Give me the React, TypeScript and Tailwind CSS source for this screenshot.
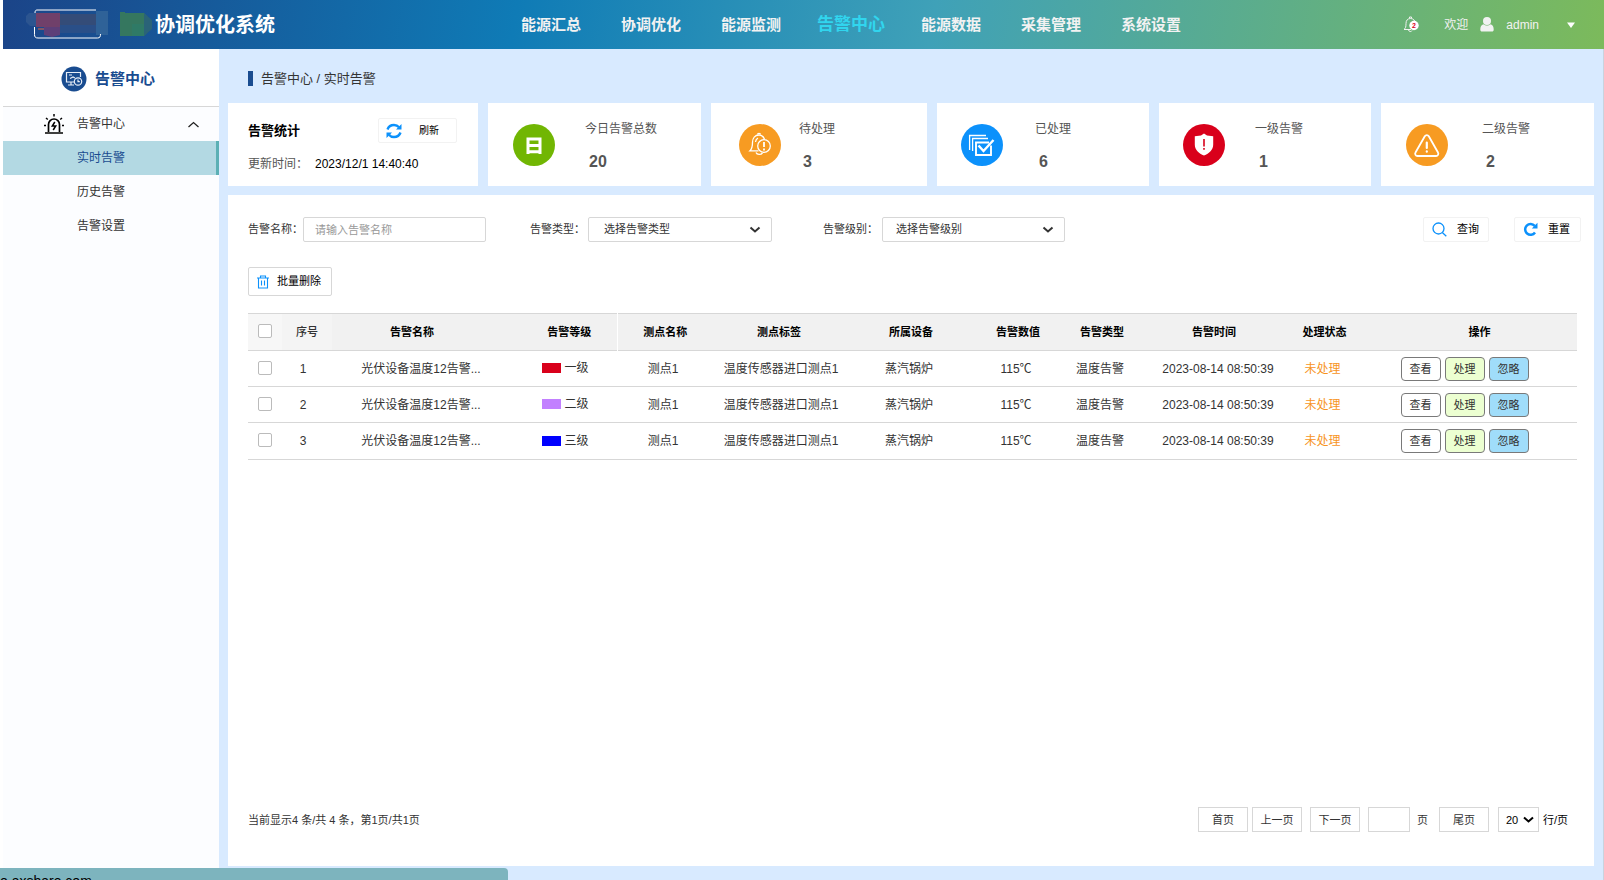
import React, { useState } from 'react';

const navItems = ['能源汇总', '协调优化', '能源监测', '告警中心', '能源数据', '采集管理', '系统设置'];

const sideItems = ['实时告警', '历史告警', '告警设置'];

const stats = [
    { label: '今日告警总数', value: 20, color: 'bg-[#71b603]', gap: 'gap-[30px] pl-[25px]', icon: <DayIcon /> },
    { label: '待处理', value: 3, color: 'bg-[#f79b22]', gap: 'gap-[18px] pl-[28px]', icon: <BellAlertIcon /> },
    { label: '已处理', value: 6, color: 'bg-[#0c91fb]', gap: 'gap-[32px] pl-[24px]', icon: <DoneIcon /> },
    { label: '一级告警', value: 1, color: 'bg-[#d9001b]', gap: 'gap-[30px] pl-[24px]', icon: <ShieldIcon /> },
    { label: '二级告警', value: 2, color: 'bg-[#f79b22]', gap: 'gap-[34px] pl-[25px]', icon: <TriangleIcon /> },
];

const rows = [
    { id: 1, level: '一级', swatch: 'bg-[#d9001b]' },
    { id: 2, level: '二级', swatch: 'bg-[#c280ff]' },
    { id: 3, level: '三级', swatch: 'bg-[#0000ff]' },
];

function DayIcon() {
    return (
        <svg viewBox="0 0 42 42" className="w-full h-full" fill="none" stroke="#fff" strokeWidth="3">
            <path d="M15 30V15h12v15M15 21.500h12M15 27.800h12" />
        </svg>
    );
}

function BellAlertIcon() {
    return (
        <svg viewBox="0 0 42 42" className="w-full h-full" fill="none" stroke="#fff" strokeWidth="1.3">
            <path d="M25.500 15.300c-1-2.800-3-4.300-5.500-4.300-4 0-6.500 3-6.500 7.500 0 4-.5 6.500-2.500 8.300h8.500" />
            <path d="M18.500 10.500c0-1.500 3-1.500 3 0M17 28.500c1 2.500 5 2.500 6.500.5M16.500 18c.2-2 1-3.200 2.500-4" />
            <circle cx="25" cy="22" r="6.300" />
            <path d="M25 18v5M25 24.500v2" strokeWidth="1.800" />
        </svg>
    );
}

function DoneIcon() {
    return (
        <svg viewBox="0 0 42 42" className="w-full h-full" fill="none" stroke="#fff">
            <path d="M8.600 26V11.500H25M11.600 27V14.500H27" strokeWidth="1.300" />
            <path d="M28 18.500H15V31h15V21.500" strokeWidth="1.900" />
            <path d="M17.500 21.500l5 5.500 10-11" strokeWidth="2.400" />
        </svg>
    );
}

function ShieldIcon() {
    return (
        <svg viewBox="0 0 42 42" className="w-full h-full">
            <path d="M21 9.500l3 2 6.200.8v8.200c0 5.500-4 9-9.200 11-5.200-2-9.200-5.500-9.200-11v-8.200l6.200-.8z" fill="#fff" />
            <path d="M20.200 15h1.600v7.500h-1.600zM20.200 24h1.600v1.800h-1.600z" fill="#d9001b" />
        </svg>
    );
}

function TriangleIcon() {
    return (
        <svg viewBox="0 0 42 42" className="w-full h-full" fill="none" stroke="#fff" strokeLinejoin="round" strokeLinecap="round">
            <path d="M18.800 12.300a2.300 2.300 0 0 1 4 0l9.200 16.200a2.300 2.300 0 0 1-2 3.500H11.500a2.300 2.300 0 0 1-2-3.500z" strokeWidth="1.800" />
            <path d="M20.800 18.500v5.500M20.800 27.300v.4" strokeWidth="2.200" />
        </svg>
    );
}

function BrandMark() {
    return (
        <svg width="127" height="34" viewBox="0 0 127 34" aria-hidden="true">
            <path d="M3 5h7v13H4l-4-4V8z" fill="#2c5590" />
            <path d="M70 3h12v24H70z" fill="#2f6298" />
            <path d="M10 5h24v14H10z" fill="#70406a" />
            <path d="M18 19h16v8l-8 2-8-2z" fill="#5d3f78" />
            <path d="M34 6h36v11H34z" fill="#344c78" />
            <path d="M34 17h36v8H34z" fill="#2a4f88" />
            <path d="M12 21h6" stroke="#e8663c" strokeWidth="1" />
            <path d="M9 5c0-2 .5-3 2-3h59M8.500 19v7.500c0 2.500 1 3.500 3.500 3.500h59.500c2.500 0 3-1.500 3-4" fill="none" stroke="#fff" strokeWidth="1" />
            <path d="M94 4h5v1h19l3 3v17l-3 3H94z" fill="#35775f" />
            <path d="M106 16h12v12h-12z" fill="#2f7a66" />
            <path d="M118 5l8 7v9l-8 7z" fill="#2a6378" />
        </svg>
    );
}

function SelectArrow() {
    return (
        <svg width="12" height="8" viewBox="0 0 12 8" className="absolute right-[11px] top-[9px] pointer-events-none" fill="none" stroke="#333" strokeWidth="2">
            <path d="M1.500 1.500L6 5.500l4.500-4" />
        </svg>
    );
}

function Header() {
    return (
        <header className="h-[49px] shrink-0 flex items-center bg-[linear-gradient(100deg,#1b4488_0%,#0f7bb6_32%,#3fa1b8_58%,#7cba5b_100%)] text-white">
            <div className="w-[498px] shrink-0 flex items-center pl-[23px]">
                <BrandMark />
                <h1 className="pl-[2px] text-[20px] leading-6 font-bold">协调优化系统</h1>
            </div>
            <nav className="flex items-center">
                {navItems.map((item) => (
                    <a
                        key={item}
                        href="#"
                        className={
                            item === '告警中心'
                                ? 'w-[100px] text-center text-[17px] leading-6 font-bold text-[#31d5ee]'
                                : 'w-[100px] text-center text-[15px] leading-6 font-bold text-[#f2f2f2]'
                        }
                    >
                        {item}
                    </a>
                ))}
            </nav>
            <div className="flex-1 flex items-center justify-end pr-[29px] text-[12px] leading-4 text-[#f2f2f2]">
                <svg width="17" height="17" viewBox="0 0 17 17" className="mr-6" role="img" aria-label="2 条通知">
                    <path d="M1 13.500c1.500-1 2-2.500 2-6C3 4.500 4.500 2.500 7.500 2.500S12 4.500 12 7M1 13.500h7M5.500 14c.5 2 3 2 3.500.5M6.500 2V1h2v1" fill="none" stroke="#f2f2f2" />
                    <circle cx="11" cy="9.500" r="4.700" fill="#fff" />
                    <text x="11" y="12" textAnchor="middle" fontSize="7" fontWeight="bold" fill="#d9001b">2</text>
                </svg>
                <span>欢迎</span>
                <svg width="14" height="15" viewBox="0 0 14 15" className="mx-3" fill="#f2f2f2">
                    <circle cx="7" cy="4" r="4" />
                    <path d="M3.500 7.200C1 8 .3 10 .3 12.500c0 1.500.7 2 1.700 2h10c1 0 1.700-.5 1.700-2 0-2.500-.7-4.500-3.200-5.300C8.500 9 5.500 9 3.500 7.200z" />
                </svg>
                <span>admin</span>
                <button aria-label="账户菜单" className="ml-7">
                    <svg width="8" height="6" viewBox="0 0 8 6" fill="#fff">
                        <path d="M0 .5h8L4 6z" />
                    </svg>
                </button>
            </div>
        </header>
    );
}

function Sidebar() {
    return (
        <aside className="w-[216px] shrink-0 bg-[#fcfdff]">
            <div className="h-[58px] flex items-center gap-2 pl-[58px] pt-[2px] bg-white border-b border-[#d7d7d7]">
                <svg width="26" height="26" viewBox="0 0 26 26">
                    <circle cx="13" cy="13" r="12.500" fill="#194c90" />
                    <g fill="none" stroke="#e8eef7" strokeWidth="1.200">
                        <path d="M19.500 11V6.500h-14v9.500H13M7 19h6M10 16v3" />
                        <path d="M8 9h3M9 12.500l3-1.500 2 1" />
                        <circle cx="17" cy="15.500" r="3.700" />
                        <path d="M17 13.500v2.200h1.800" />
                    </g>
                </svg>
                <h2 className="text-[15px] leading-6 font-bold text-[#194c90]">告警中心</h2>
            </div>
            <button className="w-full h-[34px] flex items-center pl-[41px] pr-5 text-[12px] leading-4 text-[#333]">
                <svg width="20" height="20" viewBox="0 0 20 20" className="mr-[13px]" fill="none" stroke="#000" strokeWidth="1.700">
                    <path d="M1 19h18M4.500 18v-7.500a5.500 5.500 0 0 1 11 0V18" />
                    <path d="M10 0v2.500M0 11.500h2M18 11.500h2M2 4l1.800 1.500M18 4l-1.800 1.500" strokeWidth="1.500" />
                    <path d="M10.800 8l-2.500 4h3.400l-2.500 4" strokeWidth="1.500" />
                </svg>
                <span className="flex-1 text-left">告警中心</span>
                <svg width="11" height="7" viewBox="0 0 11 7" fill="none" stroke="#222" strokeWidth="1.300">
                    <path d="M.5 6l5-4.500 5 4.500" />
                </svg>
            </button>
            {sideItems.map((item, idx) => (
                <a
                    key={item}
                    href="#"
                    className={
                        idx === 0
                            ? 'h-[34px] flex items-center pl-[74px] text-[12px] leading-4 text-[#194c90] bg-[#b3d9e3] border-r-[3px] border-[#5cb0b5]'
                            : 'h-[34px] flex items-center pl-[74px] text-[12px] leading-4 text-[#333]'
                    }
                >
                    {item}
                </a>
            ))}
        </aside>
    );
}

function StatCards() {
    return (
        <section className="flex gap-[10px]">
            <div className="w-[250px] h-[83px] bg-white pl-5 pr-[21px] pt-[15px]">
                <div className="flex items-center justify-between">
                    <h3 className="text-[13px] leading-5 font-bold text-black">告警统计</h3>
                    <button className="w-[79px] h-[25px] flex items-center pl-[7px] gap-[17px] border border-[#f2f2f2] rounded-[2px] text-[10px] text-black">
                        <svg width="16" height="16" viewBox="0 0 16 16" fill="none" stroke="#0c91fb" strokeWidth="2.400">
                            <path d="M1.500 6.500C2.500 3.500 5 2 8 2c2 0 3.800.8 5 2.300M14.500 9.500c-1 3-3.500 4.500-6.500 4.500-2 0-3.800-.8-5-2.300" />
                            <path d="M15.500 1v5.500H10zM.5 15V9.500H6z" fill="#0c91fb" stroke="none" />
                        </svg>
                        刷新
                    </button>
                </div>
                <p className="pt-[13px] flex gap-[7px] text-[12px] leading-4 text-black">
                    <span className="text-[#555]">更新时间：</span>
                    <time>2023/12/1 14:40:40</time>
                </p>
            </div>
            {stats.map((s) => (
                <div key={s.label} className={`flex-1 h-[83px] bg-white flex items-center ${s.gap}`}>
                    <div className={`w-[42px] h-[42px] shrink-0 rounded-full ${s.color}`}>{s.icon}</div>
                    <div className="pt-[5px] text-[#555]">
                        <div className="text-[12px] leading-4">{s.label}</div>
                        <div className="pl-1 pt-[13px] text-[16px] leading-6 font-bold">{s.value}</div>
                    </div>
                </div>
            ))}
        </section>
    );
}

function Filters() {
    return (
        <form className="flex items-center text-[11px] text-[#333]" onSubmit={(e) => e.preventDefault()}>
            <label htmlFor="name" className="w-[55px]">告警名称：</label>
            <input
                id="name"
                placeholder="请输入告警名称"
                className="w-[183px] h-[25px] px-[11px] border border-[#d7d7d7] rounded-[2px] placeholder:text-[#999]"
            />
            <label htmlFor="type" className="w-[58px] ml-11">告警类型：</label>
            <div className="relative">
                <select id="type" className="appearance-none w-[184px] h-[25px] px-[15px] border border-[#d7d7d7] rounded-[2px] bg-white">
                    <option>选择告警类型</option>
                </select>
                <SelectArrow />
            </div>
            <label htmlFor="level" className="w-[59px] ml-[51px]">告警级别：</label>
            <div className="relative">
                <select id="level" className="appearance-none w-[183px] h-[25px] px-[13px] border border-[#d7d7d7] rounded-[2px] bg-white">
                    <option>选择告警级别</option>
                </select>
                <SelectArrow />
            </div>
            <button className="ml-auto w-[66px] h-[25px] flex items-center gap-[10px] pl-2 border border-[#f2f2f2] rounded-[2px] text-black">
                <svg width="15" height="15" viewBox="0 0 15 15" fill="none" stroke="#0c91fb" strokeWidth="1.300">
                    <circle cx="6.500" cy="6.500" r="5.500" />
                    <path d="M10.300 10.500l4 3.800" />
                </svg>
                查询
            </button>
            <button type="reset" className="ml-[25px] w-[67px] h-[25px] flex items-center gap-[10px] pl-2 border border-[#f2f2f2] rounded-[2px] text-black">
                <svg width="15" height="15" viewBox="0 0 15 15" fill="none" stroke="#0c91fb" strokeWidth="2.500">
                    <path d="M11.700 3.900A5.400 5.400 0 1 0 12 10.500" />
                    <path d="M14.500.8v5.700H8.800z" fill="#0c91fb" stroke="none" />
                </svg>
                重置
            </button>
        </form>
    );
}

const checkboxClass =
    'block ml-[10px] mb-[2px] w-[14px] h-[14px] appearance-none border border-[#bbb] rounded-[2px] bg-white checked:bg-[#0c91fb]';

const actionClass = 'w-10 h-6 border border-[#797979] rounded-[4px] text-[11px] leading-4';

function AlarmTable() {
    const [selected, setSelected] = useState<number[]>([]);

    const toggle = (id: number) =>
        setSelected((prev) => (prev.includes(id) ? prev.filter((x) => x !== id) : [...prev, id]));

    const toggleAll = () => setSelected(selected.length === rows.length ? [] : rows.map((r) => r.id));

    return (
        <table className="w-full table-fixed border-collapse text-center text-[12px] leading-4 text-[#333]">
            <colgroup>
                <col className="w-[34px]" />
                <col className="w-[50px]" />
                <col className="w-[178px]" />
                <col className="w-[107px]" />
                <col className="w-[96px]" />
                <col className="w-[136px]" />
                <col className="w-[124px]" />
                <col className="w-[90px]" />
                <col className="w-[78px]" />
                <col className="w-[150px]" />
                <col className="w-[67px]" />
                <col />
            </colgroup>
            <thead>
                <tr className="h-[37px] bg-[#f1f1f1] border-y border-[#d7d7d7] text-[11px] text-black">
                    <th className="bg-[#f7f7f7]">
                        <input type="checkbox" aria-label="全选" className={checkboxClass} checked={selected.length === rows.length} onChange={toggleAll} />
                    </th>
                    <th className="bg-[#f4f4f4] font-medium text-[#333]">序号</th>
                    <th className="pr-[18px]">告警名称</th>
                    <th className="pl-3">告警等级</th>
                    <th className="border-l border-white">测点名称</th>
                    <th className="pr-1">测点标签</th>
                    <th>所属设备</th>
                    <th>告警数值</th>
                    <th>告警类型</th>
                    <th className="pr-1">告警时间</th>
                    <th>处理状态</th>
                    <th className="pl-6">操作</th>
                </tr>
            </thead>
            <tbody>
                {rows.map((row) => (
                    <tr key={row.id} className="h-9 last:h-[37px] border-b border-[#d7d7d7]">
                        <td>
                            <input
                                type="checkbox"
                                aria-label={`选择第${row.id}行`}
                                className={checkboxClass}
                                checked={selected.includes(row.id)}
                                onChange={() => toggle(row.id)}
                            />
                        </td>
                        <td className="pr-2">{row.id}</td>
                        <td>光伏设备温度12告警...</td>
                        <td className="pl-1">
                            <span className="inline-flex items-center gap-[3px]">
                                <span className={`w-[19px] h-[10px] ${row.swatch}`} />
                                {row.level}
                            </span>
                        </td>
                        <td className="pr-1">测点1</td>
                        <td>温度传感器进口测点1</td>
                        <td className="pr-1">蒸汽锅炉</td>
                        <td className="pr-1">115℃</td>
                        <td className="pr-1">温度告警</td>
                        <td className="pl-1">2023-08-14 08:50:39</td>
                        <td className="pr-1 text-[#f7941d]">未处理</td>
                        <td>
                            <div className="flex justify-center gap-1 pr-[6px]">
                                <button className={`${actionClass} bg-white`}>查看</button>
                                <button className={`${actionClass} bg-[#ecffd1]`}>处理</button>
                                <button className={`${actionClass} bg-[#a0ddfa]`}>忽略</button>
                            </div>
                        </td>
                    </tr>
                ))}
            </tbody>
        </table>
    );
}

function Pagination() {
    const pageBtn = 'w-[50px] h-[25px] border border-[#d7d7d7] bg-white';

    return (
        <footer className="mt-auto flex items-center justify-between text-[11px] leading-4 text-[#333]">
            <span>当前显示4 条/共 4 条，第1页/共1页</span>
            <div className="flex items-center">
                <button className={pageBtn}>首页</button>
                <button className={`${pageBtn} ml-1`}>上一页</button>
                <button className={`${pageBtn} ml-2`}>下一页</button>
                <input id="page" className="ml-2 w-[42px] h-[25px] px-1 border border-[#d7d7d7]" />
                <label htmlFor="page" className="ml-[7px]">页</label>
                <button className={`${pageBtn} ml-[11px]`}>尾页</button>
                <div className="relative ml-[9px]">
                    <select id="size" className="appearance-none block w-[41px] h-[25px] pl-[7px] border border-[#d7d7d7] bg-white text-[11px] text-black">
                        <option>20</option>
                    </select>
                    <svg width="11" height="8" viewBox="0 0 11 8" className="absolute right-[5px] top-[9px] pointer-events-none" fill="none" stroke="#000" strokeWidth="2">
                        <path d="M1 1.500l4.500 4 4.500-4" />
                    </svg>
                </div>
                <label htmlFor="size" className="ml-1 text-black">行/页</label>
            </div>
        </footer>
    );
}

export default function App() {
    return (
        <div className="min-h-screen flex flex-col pl-[3px] bg-white font-['Liberation_Sans','Noto_Sans_CJK_SC',sans-serif]">
            <Header />
            <div className="flex-1 flex border-r border-[#c9d3df]">
                <Sidebar />
                <main className="flex-1 flex flex-col bg-[#d8eaff] pl-[9px] pr-[9px] pb-[14px]">
                    <div className="h-[54px] flex items-center gap-2 pl-5 pt-[5px] text-[13px] leading-5 text-[#333]">
                        <span className="w-[5px] h-[15px] bg-[#194c90]" />
                        告警中心 / 实时告警
                    </div>
                    <StatCards />
                    <section className="mt-[9px] flex-1 flex flex-col bg-white pt-[22px] pb-[34px]">
                        <div className="pl-5 pr-[13px]">
                            <Filters />
                        </div>
                        <div className="pl-5 pr-[17px]">
                            <button className="mt-[25px] mb-[17px] w-[84px] h-[29px] flex items-center gap-2 pl-2 border border-[#d7d7d7] rounded-[2px] text-[11px] text-black">
                                <svg width="12" height="14" viewBox="0 0 12 14" fill="none" stroke="#0c91fb" strokeWidth="1.100">
                                    <path d="M0 3h12M3.500 3V1h5v2M1.500 3v10h9V3M4.500 5.500v5M7.500 5.500v5" />
                                </svg>
                                批量删除
                            </button>
                            <AlarmTable />
                        </div>
                        <div className="mt-auto pl-5 pr-[26px]">
                            <Pagination />
                        </div>
                    </section>
                </main>
            </div>
            {/* Link status bubble */}
            <div className="fixed left-0 bottom-0 w-[508px] h-3 overflow-hidden rounded-tr-[4px] bg-[#7db4be] pt-[5px] text-[14px] leading-4 text-black">
                o.axshare.com
            </div>
        </div>
    );
}
